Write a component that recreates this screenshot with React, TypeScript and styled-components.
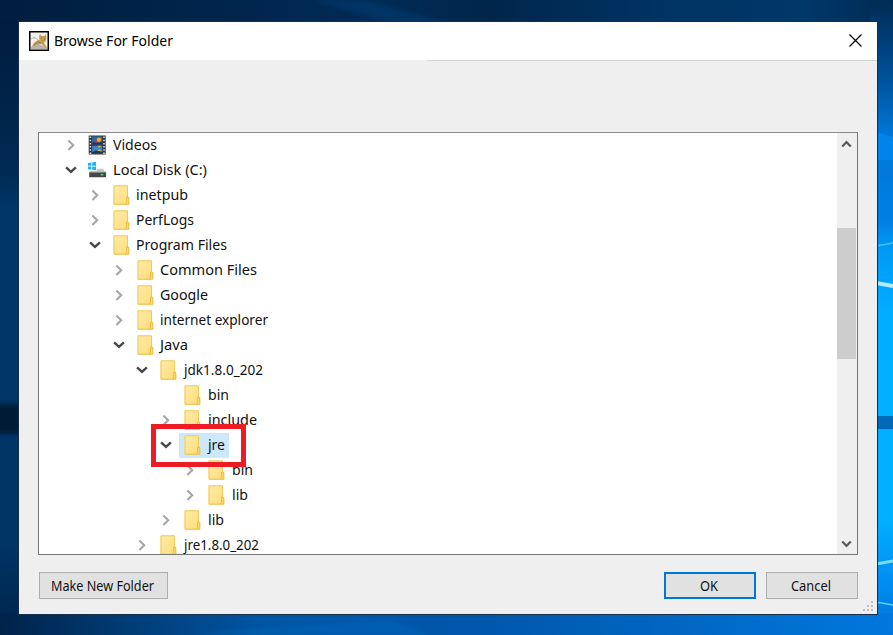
import React from "react";
import styled, { createGlobalStyle } from "styled-components";

const GlobalStyle = createGlobalStyle`
  html, body { margin: 0; padding: 0; height: 100%; overflow: hidden; }
  * { box-sizing: border-box; }
`;

const Desktop = styled.div`
  position: relative;
  width: 893px;
  height: 635px;
  padding: 21px 0 0 18px;
  overflow: hidden;
  background: #00254b;
  font-family: "Noto Sans", "Open Sans", sans-serif;
  color: #111;
`;

const WallpaperSvg = styled.svg`
  position: absolute;
  inset: 0;
`;

const Dialog = styled.section`
  position: relative;
  width: 860px;
  height: 594px;
  display: flex;
  flex-direction: column;
  background: #efefef;
  border: 1px solid #15304d;
`;

const TitleBar = styled.header`
  height: 38px;
  flex: none;
  display: flex;
  align-items: center;
  padding: 0 14px 1px 10px;
  background: #fff;
`;

const TitleRule = styled.div`
  flex: none;
  height: 1px;
  margin-left: 408px;
  background: #d4d4d4;
`;

const Title = styled.h1`
  margin: 1px auto 0 5px;
  font-size: 14px;
  line-height: 20px;
  font-weight: 400;
  color: #000;
`;

const CloseButton = styled.button`
  width: 13px;
  height: 13px;
  margin-right: 1px;
  padding: 0;
  border: 0;
  background: none;
  display: flex;
`;

const TreeFrame = styled.div`
  display: flex;
  width: 820px;
  height: 423px;
  flex: none;
  margin: 71px 0 0 19px;
  border: 1px solid #767676;
  border-top-color: #8a8a8a;
  background: #fff;
`;

const TreeList = styled.ul`
  flex: 1;
  margin: 0;
  padding: 0;
  list-style: none;
  overflow: hidden;
`;

const TreeRow = styled.li<{ $depth: number }>`
  display: flex;
  align-items: center;
  height: 25px;
  padding-left: ${(p) => 24 + p.$depth * 23.8}px;
`;

const Toggle = styled.span`
  width: 16px;
  height: 16px;
  flex: none;
  display: flex;
  margin-bottom: 1px;
`;

const Node = styled.span<{ $selected?: boolean }>`
  display: flex;
  align-items: center;
  height: 25px;
  margin-left: 5px;
  padding: 0 4px;
  background: ${(p) => (p.$selected ? "#cce8ff" : "transparent")};
`;

const NodeIcon = styled.span`
  width: 20px;
  height: 20px;
  flex: none;
  display: flex;
  margin: 0 4.7px 1px 0;
`;

const TextSvg = styled.svg`
  display: block;
  height: 25px;
  overflow: visible;
  white-space: nowrap;
`;

const ScrollBar = styled.div`
  width: 20px;
  flex: none;
  display: flex;
  flex-direction: column;
  align-items: center;
  padding-right: 1px;
  background: #efefef;
`;

const ScrollArrow = styled.span`
  height: 21px;
  display: flex;
  align-items: center;
`;

const ScrollThumb = styled.span`
  width: 19px;
  height: 131px;
  margin: 74px 0 auto 0;
  background: #cdcdcd;
`;

const Footer = styled.footer`
  display: flex;
  padding: 17px 19px 0 20px;
  gap: 10px;
`;

const PushButton = styled.button<{ $width: number; $primary?: boolean; $push?: boolean }>`
  width: ${(p) => p.$width}px;
  height: 27px;
  padding: 2px 3px 0 0;
  margin-right: ${(p) => (p.$push ? "auto" : "0")};
  display: flex;
  align-items: center;
  justify-content: center;
  font-family: inherit;
  color: #111;
  background: #e1e1e1;
  border: ${(p) => (p.$primary ? "2px solid #0078d7" : "1px solid #adadad")};
`;

const ResizeGrip = styled.svg`
  position: absolute;
  right: 3px;
  bottom: 2px;
`;

const Highlight = styled.div`
  position: absolute;
  left: 151px;
  top: 424px;
  width: 95px;
  height: 43px;
  border: 5px solid #ed1c24;
`;

function FitText({ text, width, size = 14.7 }: { text: string; width: number; size?: number }) {
  return (
    <TextSvg width={width} height={25}>
      <text x={0} y={17} fontSize={size} textLength={width} lengthAdjust="spacingAndGlyphs" fill="currentColor">
        {text}
      </text>
    </TextSvg>
  );
}

function Wallpaper() {
  return (
    <WallpaperSvg width="893" height="635" viewBox="0 0 893 635">
      <defs>
        <linearGradient id="top" x1="0" x2="1" y1="0" y2="0">
          <stop offset="0" stopColor="#001e3f" />
          <stop offset=".25" stopColor="#00254d" />
          <stop offset=".42" stopColor="#002b55" />
          <stop offset=".55" stopColor="#00264c" />
          <stop offset=".75" stopColor="#003464" />
          <stop offset=".9" stopColor="#00386a" />
          <stop offset="1" stopColor="#002b52" />
        </linearGradient>
        <linearGradient id="left" x1="0" x2="0" y1="0" y2="1">
          <stop offset="0" stopColor="#001d3e" />
          <stop offset=".25" stopColor="#002a54" />
          <stop offset=".3" stopColor="#003668" />
          <stop offset=".62" stopColor="#003668" />
          <stop offset=".85" stopColor="#003564" />
          <stop offset="1" stopColor="#00234a" />
        </linearGradient>
        <linearGradient id="right" x1="0" x2="0" y1="0" y2="1">
          <stop offset="0" stopColor="#002c55" />
          <stop offset=".06" stopColor="#003d75" />
          <stop offset=".14" stopColor="#0058a4" />
          <stop offset=".21" stopColor="#0075d6" />
          <stop offset=".35" stopColor="#0080e4" />
          <stop offset=".39" stopColor="#009af6" />
          <stop offset=".5" stopColor="#00aeff" />
          <stop offset=".82" stopColor="#00b0ff" />
          <stop offset=".91" stopColor="#008ff2" />
          <stop offset="1" stopColor="#0074d8" />
        </linearGradient>
        <linearGradient id="bottom" x1="0" x2="1" y1="0" y2="0">
          <stop offset="0" stopColor="#002348" />
          <stop offset=".13" stopColor="#003a72" />
          <stop offset=".3" stopColor="#0056a5" />
          <stop offset=".55" stopColor="#0058ac" />
          <stop offset=".75" stopColor="#0066c2" />
          <stop offset="1" stopColor="#0078de" />
        </linearGradient>
        <filter id="soft" x="-20%" y="-20%" width="140%" height="140%">
          <feGaussianBlur stdDeviation="2" />
        </filter>
      </defs>
      <rect width="893" height="24" fill="url(#top)" />
      <path d="M310 0 L365 0 L445 22 L390 22Z" fill="#003b70" opacity=".6" filter="url(#soft)" />
      <rect y="22" width="22" height="613" fill="url(#left)" />
      <rect x="-10" y="404" width="40" height="30" fill="#001a36" filter="url(#soft)" />
      <rect x="870" width="23" height="635" fill="url(#right)" />
      <path d="M876 132 L893 137 V160 H876Z" fill="#0084ec" />
      <path d="M876 246 L893 243" stroke="#45c0fb" strokeWidth="1.5" />
      <path d="M876 283 L893 286" stroke="#b4e8fb" strokeWidth="4" />
      <path d="M876 416 H893 V429 H876Z" fill="#0069b8" />
      <path d="M876 564 L893 561" stroke="#78dcfc" strokeWidth="3" />
      <path d="M876 602 L893 605" stroke="#5ed0fa" strokeWidth="1.5" />
      <rect y="613" width="893" height="22" fill="url(#bottom)" />
      <path d="M190 635 Q280 626 390 620 L430 635Z" fill="#0069bd" opacity=".4" filter="url(#soft)" />
    </WallpaperSvg>
  );
}

function CatIcon() {
  return (
    <svg width="20" height="20" viewBox="0 0 20 20">
      <rect x=".75" y=".75" width="18.5" height="18.5" fill="#f3f1ec" stroke="#000" strokeWidth="1.5" />
      <path d="M2 16.5 L4.5 13 L8 11.5 L12 14 L18 16.5 V18 H2Z" fill="#b9b4aa" />
      <path d="M2 8.5 Q3.5 5.5 6.5 7 Q9 8.5 9.5 10" fill="none" stroke="#aaa9a6" strokeWidth="1" />
      <path d="M4 13.5 Q6 9.5 10.5 9 L10 5 L11 3 L12.5 5 L15.5 5 L17 3 L17.5 7.5 L16.5 10.5 L15 12 L18 16.5 L15.5 16 L12.5 13 L7.5 13.5 L3.5 16Z" fill="#c99d53" />
      <path d="M8 10.5 L12 12 M13.5 9.5 L16 8.5 M5 13.5 L8 12" stroke="#8d6c3a" strokeWidth=".7" />
      <path d="M12 7 h1 M15 7 h1" stroke="#7b6030" strokeWidth=".8" />
    </svg>
  );
}

function Chevron({ open }: { open: boolean }) {
  return (
    <svg width="16" height="16" viewBox="0 0 16 16" fill="none">
      {open ? (
        <path d="M3.1 5.4 L8 9.9 L12.9 5.4" stroke="#484848" strokeWidth="2.4" />
      ) : (
        <path d="M5.4 3.4 L10.2 8.2 L5.4 13" stroke="#a6a6a6" strokeWidth="2.1" />
      )}
    </svg>
  );
}

function FolderIcon() {
  return (
    <svg width="20" height="20" viewBox="0 0 20 20">
      <defs>
        <linearGradient id="paper" x1="0" y1="0" x2="1" y2="1">
          <stop offset="0" stopColor="#ffeba8" />
          <stop offset="1" stopColor="#ffdd7a" />
        </linearGradient>
      </defs>
      <path d="M1.5 .4 H15.5 V12 H17.2 V19.6 H1.5Z" fill="url(#paper)" />
      <path d="M2 19.2 V.8 H15.5 V12.5" fill="none" stroke="#efc95b" />
      <path d="M2 19.2 H16.8 V13 L16.2 12 H14.6 V17 L13.4 19" fill="#fddb72" stroke="#e9bd44" />
    </svg>
  );
}

function VideoIcon() {
  return (
    <svg width="20" height="20" viewBox="0 0 20 20">
      <rect x=".7" y=".5" width="17" height="19" fill="#35363a" />
      <path d="M2.4 1.5 V19 M16 1.5 V19" stroke="#e4e4e4" strokeWidth="1.5" strokeDasharray="1.5 1.7" />
      <rect x="4.2" y="1.5" width="10" height="8" fill="#2f67ae" />
      <rect x="4.2" y="10.8" width="10" height="8" fill="#3e83d4" />
      <path d="M4.2 8.5 L7.2 6 L10.2 8 L14.2 6.5 V9.5 H4.2Z M4.2 17 L8.2 15.5 L14.2 17 V18.8 H4.2Z" fill="#24344b" />
      <circle cx="11" cy="4.8" r="2.2" fill="#e8ad27" />
      <path d="M5.6 7 l3.5 -2 v3z" fill="#c73f35" />
      <path d="M9.2 10.8 h4 l-2 2z M9.2 16 l2 -2 l2 2z" fill="#d9b446" />
    </svg>
  );
}

function DiskIcon() {
  return (
    <svg width="20" height="20" viewBox="0 0 20 20">
      <path d="M-1 3 l3.4 -.5 v3.2 H-1z M3.2 2.4 l3.8 -.6 v3.9 H3.2z M-1 6.5 h3.4 v3.2 l-3.4 -.4z M3.2 6.5 H7 v3.8 l-3.8 -.5z" fill="#17b5f4" transform="translate(1 0)" />
      <path d="M8.7 8.8 H14.8 L18 12.8 H1.2 L2.4 11 H8.7Z" fill="#c4c8ca" />
      <rect x="1.2" y="12" width="16.9" height="5.2" rx=".5" fill="#46494b" />
      <path d="M1.2 12.3 H18.1" stroke="#8b8f91" />
      <rect x="12.8" y="14" width="2.5" height="1.5" fill="#42da54" />
    </svg>
  );
}

type Item = { name: string; depth: number; width: number; state?: "open" | "closed"; kind?: "video" | "disk"; selected?: boolean };

const items: Item[] = [
  { name: "Videos", depth: 0, width: 44, state: "closed", kind: "video" },
  { name: "Local Disk (C:)", depth: 0, width: 94, state: "open", kind: "disk" },
  { name: "inetpub", depth: 1, width: 52, state: "closed" },
  { name: "PerfLogs", depth: 1, width: 58, state: "closed" },
  { name: "Program Files", depth: 1, width: 91, state: "open" },
  { name: "Common Files", depth: 2, width: 97, state: "closed" },
  { name: "Google", depth: 2, width: 48, state: "closed" },
  { name: "internet explorer", depth: 2, width: 108, state: "closed" },
  { name: "Java", depth: 2, width: 28, state: "open" },
  { name: "jdk1.8.0_202", depth: 3, width: 79, state: "open" },
  { name: "bin", depth: 4, width: 21 },
  { name: "include", depth: 4, width: 49, state: "closed" },
  { name: "jre", depth: 4, width: 17, state: "open", selected: true },
  { name: "bin", depth: 5, width: 21, state: "closed" },
  { name: "lib", depth: 5, width: 16, state: "closed" },
  { name: "lib", depth: 4, width: 16, state: "closed" },
  { name: "jre1.8.0_202", depth: 3, width: 75, state: "closed" },
];

function IconFor({ kind }: { kind?: Item["kind"] }) {
  if (kind === "video") return <VideoIcon />;
  if (kind === "disk") return <DiskIcon />;
  return <FolderIcon />;
}

export default function App() {
  return (
    <>
      <GlobalStyle />
      <Desktop>
        <Wallpaper />
        <Dialog>
          <TitleBar>
            <CatIcon />
            <Title>
              <FitText text="Browse For Folder" width={119} size={14.8} />
            </Title>
            <CloseButton aria-label="Close">
              <svg width="13" height="13" viewBox="0 0 13 13">
                <path d="M.5 .5 L12.5 12.5 M12.5 .5 L.5 12.5" stroke="#000" strokeWidth="1.15" />
              </svg>
            </CloseButton>
          </TitleBar>
          <TitleRule />
          <TreeFrame>
            <TreeList>
              {items.map((item, i) => (
                <TreeRow key={i} $depth={item.depth}>
                  <Toggle>{item.state && <Chevron open={item.state === "open"} />}</Toggle>
                  <Node $selected={item.selected}>
                    <NodeIcon>
                      <IconFor kind={item.kind} />
                    </NodeIcon>
                    <FitText text={item.name} width={item.width} />
                  </Node>
                </TreeRow>
              ))}
            </TreeList>
            <ScrollBar>
              <ScrollArrow>
                <svg width="11" height="8" viewBox="0 0 11 8">
                  <path d="M1.2 6.5 L5.5 2.2 L9.8 6.5" fill="none" stroke="#5b5b5b" strokeWidth="2.3" />
                </svg>
              </ScrollArrow>
              <ScrollThumb />
              <ScrollArrow>
                <svg width="11" height="8" viewBox="0 0 11 8">
                  <path d="M1.2 1.5 L5.5 5.8 L9.8 1.5" fill="none" stroke="#5b5b5b" strokeWidth="2.3" />
                </svg>
              </ScrollArrow>
            </ScrollBar>
          </TreeFrame>
          <Footer>
            <PushButton $width={129} $push>
              <FitText text="Make New Folder" width={103} size={14} />
            </PushButton>
            <PushButton $width={92} $primary>
              <FitText text="OK" width={18} size={14} />
            </PushButton>
            <PushButton $width={92}>
              <FitText text="Cancel" width={40} size={14} />
            </PushButton>
          </Footer>
          <ResizeGrip width="11" height="11" viewBox="0 0 11 11" fill="#bdbdbd">
            <path d="M8 0h2v2h-2z M4 4h2v2h-2z M8 4h2v2h-2z M0 8h2v2h-2z M4 8h2v2h-2z M8 8h2v2h-2z" />
          </ResizeGrip>
        </Dialog>
        <Highlight />
      </Desktop>
    </>
  );
}
